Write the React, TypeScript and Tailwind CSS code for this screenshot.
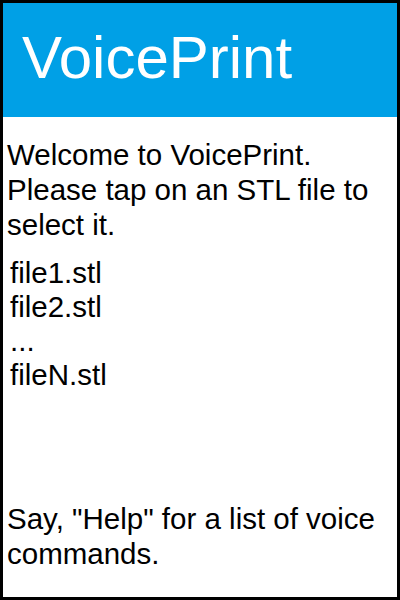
export default function App() {
  const files = ['file1.stl', 'file2.stl', '...', 'fileN.stl'];

  return (
    <div
      className="w-[400px] h-[600px] bg-white border-[3px] border-black flex flex-col text-black"
      style={{ fontFamily: '"Liberation Sans", Arial, sans-serif' }}
    >
      {/* Title bar */}
      <div className="h-[114px] bg-[#00A0E6] flex items-center pl-[19px]">
        <h1 className="text-[60px] leading-none text-white pb-[4px]">VoicePrint</h1>
      </div>

      {/* Content */}
      <div className="flex-1 flex flex-col pl-[4px] pt-[20px] pb-[26px]">
        <p className="text-[29.5px] leading-[35px]">
          Welcome to VoicePrint.
          <br />
          Please tap on an STL file to select it.
        </p>

        <ul className="mt-[14px] pl-[3px]">
          {files.map((f) => (
            <li key={f} className="text-[29.5px] leading-[34px] cursor-pointer">
              {f}
            </li>
          ))}
        </ul>

        <p className="mt-auto text-[29.5px] leading-[35px]">
          Say, "Help" for a list of voice commands.
        </p>
      </div>
    </div>
  );
}
